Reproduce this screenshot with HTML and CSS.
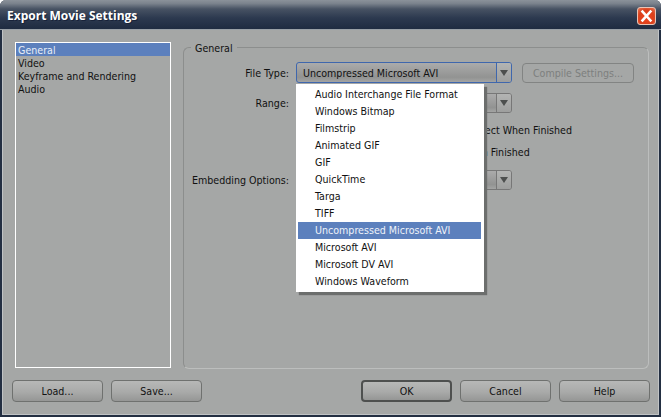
FILE: index.html
```html
<!DOCTYPE html>
<html lang="en">
<head>
<meta charset="utf-8">
<title>Export Movie Settings</title>
<link rel="stylesheet" href="styles.css">
</head>
<body>
<div class="dialog">
  <header class="titlebar">
    <h1 class="title">Export Movie Settings</h1>
    <button class="close" aria-label="Close">
      <svg width="17" height="16" viewBox="0 0 17 16"><path d="M4.5 3.5 L12.5 12.5 M12.5 3.5 L4.5 12.5" stroke="#fff" stroke-width="2.6" stroke-linecap="square" fill="none"/></svg>
    </button>
  </header>
  <main class="body">
    <ul class="nav">
      <li class="nav-item selected">General</li>
      <li class="nav-item">Video</li>
      <li class="nav-item">Keyframe and Rendering</li>
      <li class="nav-item">Audio</li>
    </ul>
    <section class="group">
      <div class="legend">General</div>
      <div class="row row-type">
        <label class="label">File Type:</label>
        <div class="combo focused"><span class="combo-text">Uncompressed Microsoft AVI</span><span class="arrow"></span></div>
        <button class="btn compile" disabled>Compile Settings...</button>
      </div>
      <div class="row row-range">
        <label class="label">Range:</label>
        <div class="combo"><span class="arrow"></span></div>
      </div>
      <div class="check check-first">Add to Project When Finished</div>
      <div class="check check-second">Beep When Finished</div>
      <div class="row row-embed">
        <label class="label">Embedding Options:</label>
        <div class="combo"><span class="arrow"></span></div>
      </div>
      <ul class="menu">
        <li class="menu-item">Audio Interchange File Format</li>
        <li class="menu-item">Windows Bitmap</li>
        <li class="menu-item">Filmstrip</li>
        <li class="menu-item">Animated GIF</li>
        <li class="menu-item">GIF</li>
        <li class="menu-item">QuickTime</li>
        <li class="menu-item">Targa</li>
        <li class="menu-item">TIFF</li>
        <li class="menu-item active">Uncompressed Microsoft AVI</li>
        <li class="menu-item">Microsoft AVI</li>
        <li class="menu-item">Microsoft DV AVI</li>
        <li class="menu-item">Windows Waveform</li>
      </ul>
    </section>
  </main>
  <footer class="footer">
    <div class="btn-group">
      <button class="btn">Load...</button>
      <button class="btn">Save...</button>
    </div>
    <div class="btn-group">
      <button class="btn default">OK</button>
      <button class="btn">Cancel</button>
      <button class="btn">Help</button>
    </div>
  </footer>
</div>
</body>
</html>
```
FILE: styles.css
```css
* { box-sizing: border-box; }
html, body { margin: 0; padding: 0; background: #fff; }
body { width: 661px; height: 417px; overflow: hidden; font-family: "DejaVu Sans Condensed", "Liberation Sans", Arial, sans-serif; font-size: 10.6px; color: #111; }
ul { list-style: none; margin: 0; padding: 0; }
.dialog { width: 661px; height: 417px; display: flex; flex-direction: column; background: #a5a7a6; border: 2px solid #232f42; border-top: 0; padding: 0 1px 1px; border-radius: 6px 6px 0 0; box-shadow: inset 1px 0 #c0c3c5, inset -1px 0 #c0c3c5, inset 0 -1px #c0c3c5; }
.titlebar { flex: none; height: 30px; margin: 0 -3px; padding: 0 5px 0 7px; display: flex; align-items: center; justify-content: space-between; background: linear-gradient(#8b929a 0, #7a828c 12%, #475263 30%, #2c394f 60%, #1f2c41 96%, #99a0a6 96%); border-radius: 6px 6px 0 0; }
.title { margin: 0; font-family: "Open Sans", sans-serif; font-size: 12px; font-weight: 700; color: #fff; text-shadow: 1px 1px 0 #18233a; }
.close { width: 19px; height: 18px; padding: 0; margin-top: 2px; display: flex; align-items: center; justify-content: center; background: radial-gradient(circle at 50% 60%, #f0451f, #d9401c 60%, #e97a58); border: 1px solid #e8c4b6; border-radius: 3px; }
.body { flex: none; height: 338px; padding: 12px 8px 0 12px; display: flex; align-items: flex-start; }
.nav { width: 156px; height: 326px; flex: none; border: 1px solid #fff; }
.nav-item { height: 13px; padding: 1px 0 0 2px; line-height: 13px; }
.nav-item.selected { background: #5c80bd; color: #e8eef8; }
.group { position: relative; width: 466px; height: 322px; margin: 5px 0 0 12px; border: 1px solid #8c8e8d; border-right-color: #bcbebd; border-bottom-color: #bcbebd; border-radius: 6px; }
.legend { position: absolute; left: 7px; top: -7px; padding: 0 4px; line-height: 14px; background: #a5a7a6; }
.row { display: flex; align-items: center; }
.label { width: 105px; text-align: right; flex: none; white-space: nowrap; }
.row-type { margin-top: 14px; }
.row-type .label { padding-top: 1px; }
.row-range { margin-top: 10px; }
.row-embed { margin-top: 11px; }
.row-embed .label { padding-bottom: 1px; }
.combo { margin-left: 7px; width: 216px; height: 20px; display: flex; align-items: center; justify-content: flex-end; border: 1px solid #777; border-radius: 3px; background: linear-gradient(#ababab, #929392 75%, #a3a4a3); padding-left: 6px; }
.combo.focused { height: 21px; border: 1.5px solid #3f67ad; justify-content: space-between; }
.combo-text { line-height: 1; padding-top: 2px; }
.arrow { width: 15px; height: 100%; flex: none; border-left: 1px solid #777; display: flex; align-items: center; justify-content: center; background: linear-gradient(#b3b4b3, #9e9f9e); border-radius: 0 2px 2px 0; }
.focused .arrow { border-left-color: #3f67ad; }
.arrow::after { content: ""; border: 4px solid transparent; border-top: 6px solid #4d4f4e; border-bottom: 0; }
.btn { width: 91px; height: 22px; padding: 0; font: inherit; color: #111; border: 1px solid #6f716f; border-radius: 4px; background: linear-gradient(#b7b8b7, #a9aaa9 55%, #959695); }
.btn.default { border: 2px solid #4e504f; }
.btn:disabled { color: #7d7f7e; background: #a5a7a6; border-color: #828483; padding-top: 1px; }
.compile { width: 112px; height: 20px; margin-left: 10px; }
.check { margin-left: 249px; line-height: 13px; }
.check-first { margin-top: 11px; }
.check-second { margin-top: 9px; }
.menu { position: absolute; left: 112px; top: 36px; width: 188px; height: 208px; background: #fff; padding: 2px 3px 2px 2px; box-shadow: 3px 3px 1px #6c6e6d; }
.menu-item { height: 17px; line-height: 17px; padding-left: 17px; }
.menu-item.active { background: #5c80bd; color: #eef2f9; }
.footer { flex: none; height: 45px; padding: 12px 8px 0 9px; display: flex; justify-content: space-between; }
.btn-group { display: flex; gap: 8px; }
```
